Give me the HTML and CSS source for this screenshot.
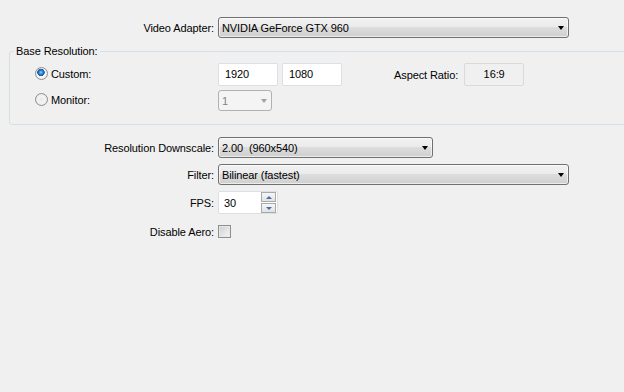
FILE: index.html
```html
<!DOCTYPE html>
<html>
<head>
<meta charset="utf-8">
<link rel="stylesheet" href="styles.css">
</head>
<body>
<div class="page">
  <div class="row row-adapter">
    <span class="lbl">Video Adapter:</span>
    <div class="combo w-351"><span class="combo-text">NVIDIA GeForce GTX 960</span><span class="arrow"></span></div>
  </div>

  <fieldset class="group">
    <legend class="legend">Base Resolution:</legend>
    <div class="grow grow-custom">
      <span class="radio-lbl"><span class="radio checked"></span>Custom:</span>
      <div class="field">1920</div>
      <div class="field">1080</div>
      <span class="aspect-lbl">Aspect Ratio:</span>
      <div class="readonly">16:9</div>
    </div>
    <div class="grow grow-monitor">
      <span class="radio-lbl"><span class="radio"></span>Monitor:</span>
      <div class="combo disabled w-54"><span class="combo-text">1</span><span class="arrow"></span></div>
    </div>
  </fieldset>

  <div class="form">
    <div class="row">
      <span class="lbl">Resolution Downscale:</span>
      <div class="combo w-215"><span class="combo-text">2.00&nbsp; (960x540)</span><span class="arrow"></span></div>
    </div>
    <div class="row">
      <span class="lbl">Filter:</span>
      <div class="combo w-351"><span class="combo-text">Bilinear (fastest)</span><span class="arrow"></span></div>
    </div>
    <div class="row">
      <span class="lbl">FPS:</span>
      <div class="spin">
        <span class="spin-text">30</span>
        <div class="spin-btns">
          <span class="spin-btn"><span class="tri up"></span></span>
          <span class="spin-btn"><span class="tri down"></span></span>
        </div>
      </div>
    </div>
    <div class="row row-check">
      <span class="lbl">Disable Aero:</span>
      <span class="checkbox"></span>
    </div>
  </div>
</div>
</body>
</html>
```

FILE: styles.css
```css
html, body {
  margin: 0;
  padding: 0;
  background: #f0f0f0;
  width: 624px;
  height: 392px;
  overflow: hidden;
}
.page {
  font-family: "Liberation Sans", Arial, sans-serif;
  font-size: 11px;
  letter-spacing: -0.1px;
  color: #000;
  padding-top: 17px;
}
.row {
  display: flex;
  align-items: center;
}
.lbl {
  width: 218px;
  text-align: right;
  padding-right: 4px;
  box-sizing: border-box;
}
.combo {
  box-sizing: border-box;
  height: 21px;
  border: 1px solid #707070;
  border-radius: 3px;
  background: linear-gradient(#f2f2f2 0%, #ebebeb 45%, #dddddd 50%, #cfcfcf 100%);
  box-shadow: inset 0 0 0 1px rgba(255,255,255,0.6);
  display: flex;
  align-items: center;
  padding-left: 3px;
}
.combo-text {
  flex: 1;
  white-space: pre;
}
.arrow {
  width: 0;
  height: 0;
  border-left: 3.5px solid transparent;
  border-right: 3.5px solid transparent;
  border-top: 4px solid #000;
  margin-right: 4px;
}
.w-351 { width: 351px; }
.w-215 { width: 215px; }
.w-54 { width: 54px; }
.combo.disabled {
  background: #f4f4f4;
  border-color: #adb2b5;
  box-shadow: none;
  color: #838383;
}
.combo.disabled .arrow {
  border-top-color: #a0a0a0;
}

.group {
  margin: 7px -10px 0 9px;
  padding: 5px 0 13px 4px;
  border: 1px solid #d5dfe5;
  border-radius: 3px;
}
.legend {
  padding: 0 2px;
  line-height: 13px;
}
.grow {
  display: flex;
  align-items: center;
}
.grow-monitor {
  margin-top: 4px;
}
.radio-lbl {
  width: 204px;
  display: flex;
  align-items: center;
  padding-left: 21px;
  box-sizing: border-box;
  margin-bottom: 2px;
}
.radio {
  width: 13px;
  height: 13px;
  border-radius: 50%;
  box-sizing: border-box;
  border: 1px solid #8e8f8f;
  background: radial-gradient(circle at 50% 50%, #e6e6e6 0, #f4f4f4 40%, #dcdcdc 100%);
  margin-right: 3px;
}
.radio.checked {
  background:
    radial-gradient(circle at 45% 40%, #8fd0ff 0, #2e7fd0 2px, #1b5a9c 3.5px, transparent 4px),
    radial-gradient(circle at 50% 50%, #ffffff 0, #f4f4f4 60%, #d8d8d8 100%);
}
.field {
  box-sizing: border-box;
  width: 60px;
  height: 23px;
  background: #fff;
  border: 1px solid #dcdfe4;
  border-radius: 2px;
  padding: 0 6px;
  line-height: 21px;
  margin-right: 4px;
}
.aspect-lbl {
  margin-left: 48px;
  margin-right: 6px;
}
.readonly {
  box-sizing: border-box;
  width: 60px;
  height: 23px;
  border: 1px solid #dadada;
  border-radius: 2px;
  text-align: center;
  line-height: 21px;
  background: #f0f0f0;
}

.form {
  margin-top: 12px;
}
.form .row + .row {
  margin-top: 6px;
}
.form .row-check {
  margin-top: 11px !important;
}
.spin {
  box-sizing: border-box;
  width: 60px;
  height: 23px;
  background: #fff;
  border: 1px solid #dcdfe4;
  border-radius: 2px;
  display: flex;
  align-items: center;
  padding-left: 5px;
}
.spin-text {
  flex: 1;
}
.spin-btns {
  display: flex;
  flex-direction: column;
  gap: 1px;
  margin-right: 1px;
}
.spin-btn {
  box-sizing: border-box;
  width: 15px;
  height: 10px;
  border: 1px solid #a9a9a9;
  background: linear-gradient(#f6f6f6, #e2e2e2);
  display: flex;
  align-items: center;
  justify-content: center;
}
.tri {
  width: 0;
  height: 0;
  border-left: 3px solid transparent;
  border-right: 3px solid transparent;
}
.tri.up { border-bottom: 3px solid #4a6aa8; }
.tri.down { border-top: 3px solid #4a6aa8; }
.checkbox {
  box-sizing: border-box;
  width: 13px;
  height: 13px;
  border: 1px solid #8e8f8f;
  background: linear-gradient(135deg, #cbcfd5, #f6f6f6);
  box-shadow: inset 0 0 0 1px #e8e8e8;
}
```
